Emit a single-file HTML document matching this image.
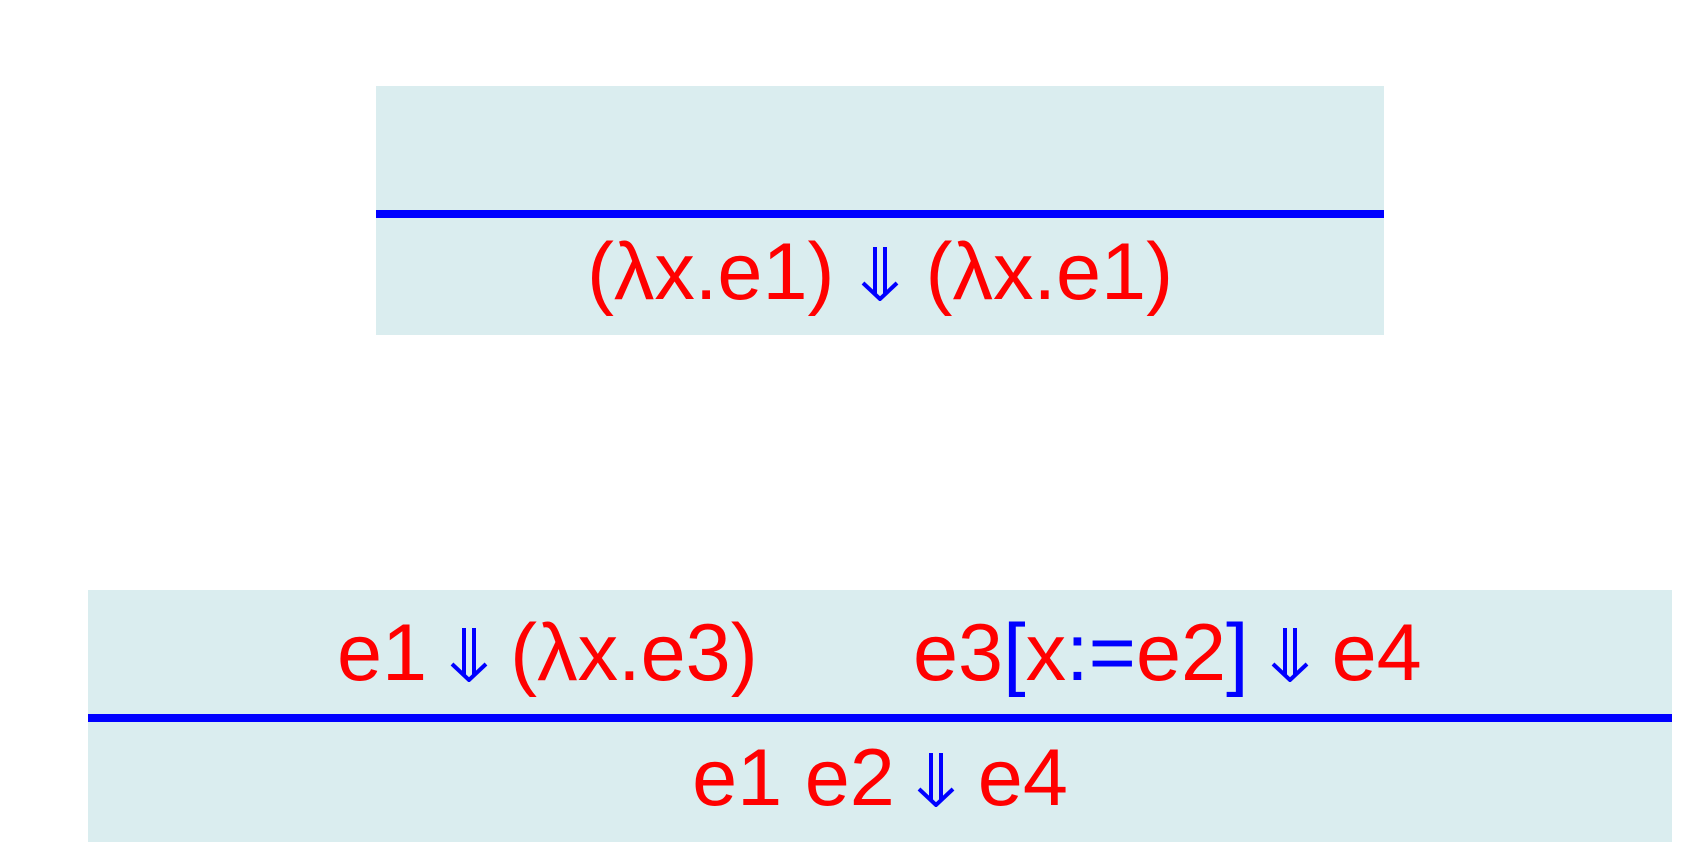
<!DOCTYPE html>
<html><head><style>
body{margin:0;width:1704px;height:862px;background:#fff;position:relative;overflow:hidden;font-family:"Liberation Sans",Arial,sans-serif;}
.box{position:absolute;background:#daedef;}
.line{position:absolute;background:#0000ff;}
.t{position:absolute;font-size:81px;line-height:1;color:#ff0000;white-space:pre;}
.b{color:#0000ff;}
svg.ar{display:inline-block;width:38px;height:56px;vertical-align:-2px;}
</style></head><body>
<div class="box" style="left:376px;top:86px;width:1008px;height:249px"></div>
<div class="line" style="left:376px;top:210px;width:1008px;height:8px"></div>
<div class="t" style="left:376px;width:1008px;text-align:center;top:232px">(λx.e1) <svg class="ar" style="margin:0 4px" viewBox="0 0 38 56"><path d="M14 2V50M24 2V50M2 38L19 54L36 38" fill="none" stroke="#00f" stroke-width="4"/></svg> (λx.e1)</div>

<div class="box" style="left:88px;top:590px;width:1584px;height:252px"></div>
<div class="line" style="left:88px;top:714px;width:1584px;height:8px"></div>
<div class="t" style="left:337px;top:613px">e1 <svg class="ar" viewBox="0 0 38 56"><path d="M14 2V50M24 2V50M2 38L19 54L36 38" fill="none" stroke="#00f" stroke-width="4"/></svg> (λx.e3)</div>
<div class="t" style="left:913px;top:613px">e3<span class="b">[</span>x<span class="b">:=</span>e2<span class="b">]</span> <svg class="ar" viewBox="0 0 38 56"><path d="M14 2V50M24 2V50M2 38L19 54L36 38" fill="none" stroke="#00f" stroke-width="4"/></svg> e4</div>
<div class="t" style="left:88px;width:1584px;text-align:center;top:738px">e1 e2 <svg class="ar" viewBox="0 0 38 56"><path d="M14 2V50M24 2V50M2 38L19 54L36 38" fill="none" stroke="#00f" stroke-width="4"/></svg> e4</div>
</body></html>
